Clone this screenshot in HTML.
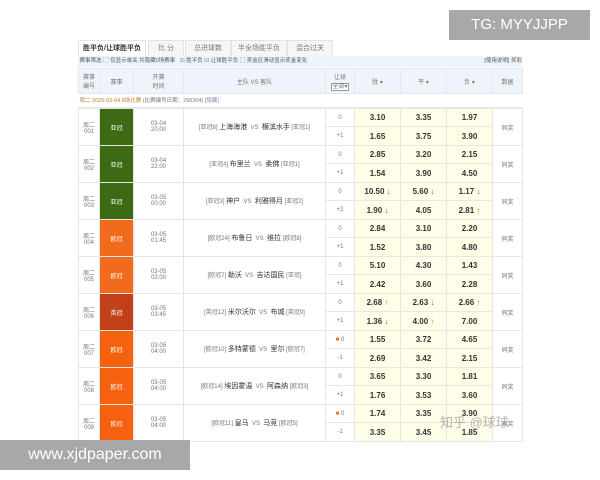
<!DOCTYPE html><html><head><meta charset="utf-8"><style>
body{margin:0;width:600px;height:480px;background:#fff;position:relative;overflow:hidden;font-family:"Liberation Sans","Noto Sans CJK SC",sans-serif;color:#555}
.a{position:absolute}
.tab{position:absolute;top:40px;height:15px;font-size:7px;line-height:15px;text-align:center;border:1px solid #e4e4e4;border-bottom:none;background:#f6f6f6;color:#777}
table{position:absolute;left:78px;top:68px;border-collapse:collapse;font-size:6px;table-layout:fixed}
td{border:1px solid #e6e6e6;text-align:center;padding:0;color:#777}
.o{background:#fdfde8;font-size:8px;font-weight:bold;color:#333}
.lg{color:#fff}
.tm b{font-size:7px;color:#333;font-weight:normal}
.up{color:#e08a20}.dn{color:#3a9a3a}
</style></head><body>
<div class="a" style="left:449px;top:10px;width:141px;height:30px;background:#a8a8a8;color:#fff;font-size:15px;line-height:30px;text-align:center">TG: MYYJJPP</div>
<div class="tab" style="left:78px;width:66px;background:#fff;color:#333;font-weight:bold">胜平负/让球胜平负</div>
<div class="tab" style="left:148px;width:34px">比 分</div>
<div class="tab" style="left:185px;width:44px">总进球数</div>
<div class="tab" style="left:231px;width:54px">半全场胜平负</div>
<div class="tab" style="left:287px;width:44px">混合过关</div>
<div class="a" style="left:78px;top:56px;width:444px;height:11px;background:#eef4fb;font-size:5.5px;line-height:11px;color:#555">&nbsp;赛事筛选 ▢ 仅显示单关 共隐藏0场赛事 &nbsp;&nbsp;<span style="color:#2a6fc9">☑</span> 胜平负 <span style="color:#2a6fc9">☑</span> 让球胜平负 ▢ 奖金区滑动显示奖金变化<span style="float:right">[使用说明] 奖彩</span></div>
<div class="a" style="left:78px;top:95px;width:444px;height:12px;background:#fff;font-size:5.5px;line-height:12px;color:#777;border-bottom:1px solid #e6e6e6"><span style="color:#c87a3a">&nbsp;周二 2025-03-04 8场比赛</span> (比赛编号日期：250304) <span style="color:#88a">[隐藏]</span></div>
<table>
<colgroup><col style="width:21px"><col style="width:34px"><col style="width:50px"><col style="width:142px"><col style="width:29px"><col style="width:46px"><col style="width:46px"><col style="width:46px"><col style="width:30px"></colgroup>
<tr style="height:25px;background:#eef4fb"><td>赛事<br>编号</td><td>赛事</td><td>开赛<br>时间</td><td>主队 VS 客队</td><td>让球<br><span style="border:1px solid #999;background:#fff">全部▾</span></td><td>胜 ▾</td><td>平 ▾</td><td>负 ▾</td><td>数据</td></tr>
<tr style="height:14px"><td colspan="9" style="border:none"></td></tr>
</table>
<table style="top:108px">
<colgroup><col style="width:21px"><col style="width:34px"><col style="width:50px"><col style="width:142px"><col style="width:29px"><col style="width:46px"><col style="width:46px"><col style="width:46px"><col style="width:30px"></colgroup>
<tr style="height:18px"><td rowspan="2">周二<br>001</td><td rowspan="2" class="lg" style="background:#3d6a12">亚冠</td><td rowspan="2">03-04<br>20:00</td><td rowspan="2" class="tm">[亚冠8] <b>上海海港</b> &nbsp;VS&nbsp; <b>横滨水手</b> [亚冠1]</td><td>0</td><td class="o">3.10</td><td class="o">3.35</td><td class="o">1.97</td><td rowspan="2">同奖</td></tr>
<tr style="height:19px"><td>+1</td><td class="o">1.65</td><td class="o">3.75</td><td class="o">3.90</td></tr>
<tr style="height:18px"><td rowspan="2">周二<br>002</td><td rowspan="2" class="lg" style="background:#3d6a12">亚冠</td><td rowspan="2">03-04<br>22:00</td><td rowspan="2" class="tm">[亚冠4] <b>布里兰</b> &nbsp;VS&nbsp; <b>柔佛</b> [亚冠1]</td><td>0</td><td class="o">2.85</td><td class="o">3.20</td><td class="o">2.15</td><td rowspan="2">同奖</td></tr>
<tr style="height:19px"><td>+1</td><td class="o">1.54</td><td class="o">3.90</td><td class="o">4.50</td></tr>
<tr style="height:18px"><td rowspan="2">周二<br>003</td><td rowspan="2" class="lg" style="background:#3d6a12">亚冠</td><td rowspan="2">03-05<br>00:00</td><td rowspan="2" class="tm">[亚冠3] <b>神户</b> &nbsp;VS&nbsp; <b>利雅得月</b> [亚冠2]</td><td>0</td><td class="o">10.50 <span class="dn">↓</span></td><td class="o">5.60 <span class="dn">↓</span></td><td class="o">1.17 <span class="dn">↓</span></td><td rowspan="2">同奖</td></tr>
<tr style="height:19px"><td>+2</td><td class="o">1.90 <span class="dn">↓</span></td><td class="o">4.05</td><td class="o">2.81 <span class="up">↑</span></td></tr>
<tr style="height:18px"><td rowspan="2">周二<br>004</td><td rowspan="2" class="lg" style="background:#f26a1b">欧冠</td><td rowspan="2">03-05<br>01:45</td><td rowspan="2" class="tm">[欧冠24] <b>布鲁日</b> &nbsp;VS&nbsp; <b>维拉</b> [欧冠8]</td><td>0</td><td class="o">2.84</td><td class="o">3.10</td><td class="o">2.20</td><td rowspan="2">同奖</td></tr>
<tr style="height:19px"><td>+1</td><td class="o">1.52</td><td class="o">3.80</td><td class="o">4.80</td></tr>
<tr style="height:18px"><td rowspan="2">周二<br>005</td><td rowspan="2" class="lg" style="background:#f26a1b">欧冠</td><td rowspan="2">03-05<br>02:00</td><td rowspan="2" class="tm">[欧冠7] <b>勒沃</b> &nbsp;VS&nbsp; <b>吉达国民</b> [亚冠]</td><td>0</td><td class="o">5.10</td><td class="o">4.30</td><td class="o">1.43</td><td rowspan="2">同奖</td></tr>
<tr style="height:19px"><td>+1</td><td class="o">2.42</td><td class="o">3.60</td><td class="o">2.28</td></tr>
<tr style="height:18px"><td rowspan="2">周二<br>006</td><td rowspan="2" class="lg" style="background:#c2401a">英冠</td><td rowspan="2">03-05<br>03:45</td><td rowspan="2" class="tm">[英冠12] <b>米尔沃尔</b> &nbsp;VS&nbsp; <b>布城</b> [英冠9]</td><td>0</td><td class="o">2.68 <span class="up">↑</span></td><td class="o">2.63 <span class="dn">↓</span></td><td class="o">2.66 <span class="up">↑</span></td><td rowspan="2">同奖</td></tr>
<tr style="height:19px"><td>+1</td><td class="o">1.36 <span class="dn">↓</span></td><td class="o">4.00 <span class="up">↑</span></td><td class="o">7.00</td></tr>
<tr style="height:18px"><td rowspan="2">周二<br>007</td><td rowspan="2" class="lg" style="background:#f5620f">欧冠</td><td rowspan="2">03-05<br>04:00</td><td rowspan="2" class="tm">[欧冠10] <b>多特蒙德</b> &nbsp;VS&nbsp; <b>里尔</b> [欧冠7]</td><td><span style="color:#e8702a">■</span> 0</td><td class="o">1.55</td><td class="o">3.72</td><td class="o">4.65</td><td rowspan="2">同奖</td></tr>
<tr style="height:19px"><td>-1</td><td class="o">2.69</td><td class="o">3.42</td><td class="o">2.15</td></tr>
<tr style="height:18px"><td rowspan="2">周二<br>008</td><td rowspan="2" class="lg" style="background:#f5620f">欧冠</td><td rowspan="2">03-05<br>04:00</td><td rowspan="2" class="tm">[欧冠14] <b>埃因霍温</b> &nbsp;VS&nbsp; <b>阿森纳</b> [欧冠3]</td><td>0</td><td class="o">3.65</td><td class="o">3.30</td><td class="o">1.81</td><td rowspan="2">同奖</td></tr>
<tr style="height:19px"><td>+1</td><td class="o">1.76</td><td class="o">3.53</td><td class="o">3.60</td></tr>
<tr style="height:18px"><td rowspan="2">周二<br>009</td><td rowspan="2" class="lg" style="background:#f5620f">欧冠</td><td rowspan="2">03-05<br>04:00</td><td rowspan="2" class="tm">[欧冠11] <b>皇马</b> &nbsp;VS&nbsp; <b>马竞</b> [欧冠5]</td><td><span style="color:#e8702a">■</span> 0</td><td class="o">1.74</td><td class="o">3.35</td><td class="o">3.90</td><td rowspan="2">同奖</td></tr>
<tr style="height:19px"><td>-1</td><td class="o">3.35</td><td class="o">3.45</td><td class="o">1.85</td></tr>
</table>
<div class="a" style="left:440px;top:412px;font-size:13px;color:rgba(150,150,150,.7)">知乎 @球球</div>
<div class="a" style="left:0;top:440px;width:190px;height:30px;background:#a8a8a8;color:#fff;font-size:16px;line-height:30px;text-align:center">www.xjdpaper.com</div>
</body></html>
